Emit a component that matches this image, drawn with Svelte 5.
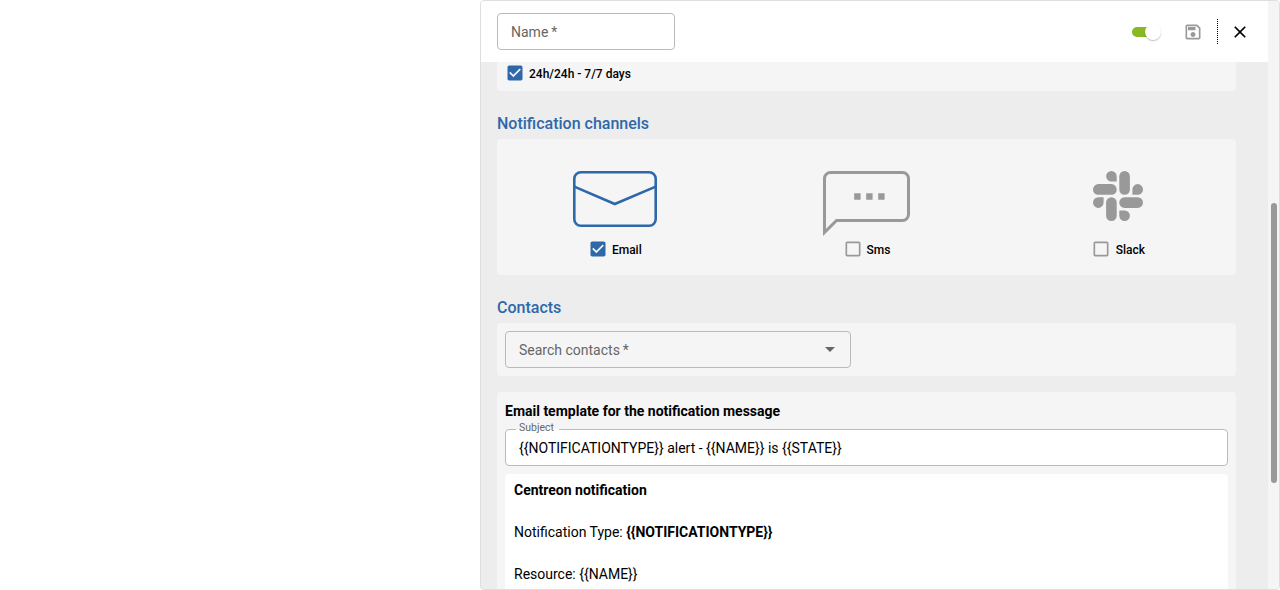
<script>
  const checkedPath =
    'M19 3H5c-1.11 0-2 .9-2 2v14c0 1.1.89 2 2 2h14c1.11 0 2-.9 2-2V5c0-1.1-.89-2-2-2zm-9 14l-5-5 1.41-1.41L10 14.17l7.59-7.59L19 8l-9 9z';
  const emptyPath =
    'M19 5v14H5V5h14m0-2H5c-1.1 0-2 .9-2 2v14c0 1.1.9 2 2 2h14c1.1 0 2-.9 2-2V5c0-1.1-.9-2-2-2z';
  const subject = '{{NOTIFICATIONTYPE}} alert - {{NAME}} is {{STATE}}';
  const typeMacro = '{{NOTIFICATIONTYPE}}';
  const nameMacro = '{{NAME}}';
</script>

{#snippet check(label, on)}
  <div class="check">
    <svg class:on viewBox="0 0 24 24" width="20" height="20"><path d={on ? checkedPath : emptyPath} /></svg>
    <span>{label}</span>
  </div>
{/snippet}

<div class="page">
  <section class="panel">
    <div class="main">
      <header>
        <div class="field name"><span>Name&thinsp;*</span></div>
        <div class="actions">
          <div class="switch"><i></i></div>
          <svg class="save" viewBox="0 0 24 24" width="20" height="20">
            <path d="M17 3H5c-1.11 0-2 .9-2 2v14c0 1.1.89 2 2 2h14c1.1 0 2-.9 2-2V7l-4-4zm2 16H5V5h11.17L19 7.83V19zm-7-7c-1.66 0-3 1.34-3 3s1.34 3 3 3 3-1.34 3-3-1.34-3-3-3zM6 6h9v4H6z" />
          </svg>
          <div class="divider"></div>
          <svg class="close" viewBox="0 0 24 24" width="20" height="20">
            <path d="M19 6.41L17.59 5 12 10.59 6.41 5 5 6.41 10.59 12 5 17.59 6.41 19 12 13.41 17.59 19 19 17.59 13.41 12z" />
          </svg>
        </div>
      </header>
      <div class="content">
        <div class="card period">{@render check('24h/24h - 7/7 days', true)}</div>
        <h2>Notification channels</h2>
        <div class="card channels">
          <div class="channel">
            <svg class="email" width="84" height="66" viewBox="0 0 84 66" fill="none">
              <rect x="1.3" y="1.3" width="81.4" height="53.4" rx="6.5" />
              <path d="M1.3 15.6L41.8 33L82.7 15.6" />
            </svg>
            {@render check('Email', true)}
          </div>
          <div class="channel">
            <svg class="sms" width="87" height="66" viewBox="0 0 87 66">
              <path class="bubble" d="M1.5 61.5V7.5a6 6 0 0 1 6-6H79.5a6 6 0 0 1 6 6V43.500a6 6 0 0 1-6 6H13.500Z" />
              <path d="M31.200 22.300h6.400v6.400h-6.400zM43.200 22.300h6.400v6.400h-6.400zM55.200 22.300h6.400v6.400h-6.400z" />
            </svg>
            {@render check('Sms', false)}
          </div>
          <div class="channel">
            <svg class="slack" width="50" height="66" viewBox="0 0 50 66">
              <g id="arm">
                <rect x="26.3" y="0" width="10.600" height="23.700" rx="5.300" />
                <path d="M39.400 23.700V18.400a5.300 5.300 0 1 1 5.300 5.300Z" />
              </g>
              <use href="#arm" transform="rotate(90 25 25)" />
              <use href="#arm" transform="rotate(180 25 25)" />
              <use href="#arm" transform="rotate(270 25 25)" />
            </svg>
            {@render check('Slack', false)}
          </div>
        </div>
        <h2>Contacts</h2>
        <div class="card contacts">
          <div class="field search">
            <span>Search contacts&thinsp;*</span>
            <svg viewBox="0 0 24 24" width="24" height="24"><path d="M7 10l5 5 5-5z" /></svg>
          </div>
        </div>
        <div class="card template">
          <h3>Email template for the notification message</h3>
          <fieldset>
            <legend>Subject</legend>
            <span>{subject}</span>
          </fieldset>
          <div class="editor">
            <p><b>Centreon notification</b></p>
            <p>Notification Type: <b>{typeMacro}</b></p>
            <p>Resource: {nameMacro}</p>
          </div>
        </div>
      </div>
    </div>
    <div class="track"><div class="thumb"></div></div>
  </section>
</div>

<style>
  .page, .page * { box-sizing: border-box; }
  .page {
    display: flex;
    justify-content: flex-end;
    height: 590px;
    overflow: hidden;
    background: #fff;
    font: 400 14px/21px Roboto, sans-serif;
    color: #000;
  }
  svg { display: block; flex: none; }
  .panel {
    display: flex;
    width: 800px;
    height: 590px;
    border: 1px solid #dedede;
    border-radius: 4px;
    overflow: hidden;
    background: #ededed;
  }
  .main { flex: 1; display: flex; flex-direction: column; min-width: 0; }
  header {
    display: flex;
    flex: none;
    justify-content: space-between;
    align-items: center;
    height: 61px;
    padding: 0 18px 0 16px;
    background: #fff;
  }
  .field {
    display: flex;
    align-items: center;
    height: 37px;
    padding: 0 13px;
    border: 1px solid #bababa;
    border-radius: 4px;
    color: #666;
  }
  .field span { padding-top: 2px; }
  .name { width: 178px; }
  .actions { display: flex; align-items: center; }
  .switch {
    display: flex;
    align-items: center;
    justify-content: flex-end;
    width: 26px;
    height: 10px;
    margin-right: 25px;
    border-radius: 5px;
    background: #88b922;
  }
  .switch i {
    flex: none;
    width: 16px;
    height: 16px;
    margin-right: -2.5px;
    border-radius: 50%;
    background: #fff;
    box-shadow: 0 1px 1px rgba(0, 0, 0, 0.16), 0 1px 2px rgba(0, 0, 0, 0.1);
  }
  .save { fill: #999; }
  .divider { width: 1px; height: 25px; margin: 0 12px 0 14px; border-left: 1px dotted #000; }
  .close { fill: #000; }
  .content { flex: 1; min-height: 0; overflow: hidden; padding: 0 32px 0 16px; }
  .card { border-radius: 4px; background: #f5f5f5; }
  .period { height: 29px; padding: 1px 8px; border-radius: 0 0 4px 4px; }
  .check {
    display: flex;
    align-items: center;
    gap: 4px;
    height: 20px;
    font-size: 12px;
    font-weight: 500;
  }
  .check span { padding-top: 2px; }
  .check svg { fill: #999; }
  .check svg.on { fill: #2e68aa; }
  h2 {
    margin: 21px 0 3px;
    font-size: 16px;
    line-height: 24px;
    font-weight: 500;
    color: #2e68aa;
  }
  .channels { display: grid; grid-template-columns: repeat(3, 1fr); gap: 16px; height: 136px; padding-top: 32px; }
  .channel { display: flex; flex-direction: column; align-items: center; gap: 2px; }
  .channel:last-child .check { gap: 4.5px; }
  .email { stroke: #2e68aa; stroke-width: 2.6; }
  .sms, .slack { fill: #999; }
  .sms .bubble { fill: none; stroke: #999; stroke-width: 3; }
  .contacts { height: 53px; padding: 8px; }
  .search { width: 346px; justify-content: space-between; padding-right: 8px; }
  .search svg { fill: #666; margin-bottom: 1px; }
  .template { height: 220px; margin-top: 16px; padding: 8px; }
  h3 { margin: 0; font-size: 14px; line-height: 22px; font-weight: 700; }
  fieldset {
    height: 44px;
    margin: 0;
    padding: 0 10px;
    border: 1px solid #bababa;
    border-radius: 4px;
    background: #fff;
    min-width: 0;
  }
  legend {
    height: 15px;
    padding: 0 5px 0 3px;
    font-size: 10.5px;
    line-height: 12px;
    color: #666;
  }
  fieldset span { display: block; padding: 1px 3px; }
  .editor { height: 138px; margin-top: 8px; padding: 6px 9px; border-radius: 4px 4px 0 0; background: #fff; }
  p { margin: 0 0 21px; }
  .track { flex: none; width: 11px; padding: 202px 2px 0 3px; background: #f5f5f5; }
  .thumb { width: 6px; height: 280px; border-radius: 3px; background: #999; }
</style>
